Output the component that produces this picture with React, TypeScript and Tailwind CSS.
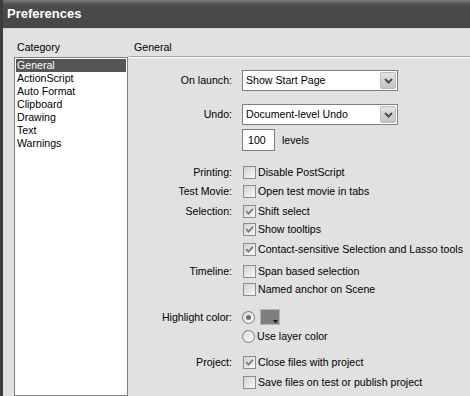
import React from 'react';

const categories = ['General', 'ActionScript', 'Auto Format', 'Clipboard', 'Drawing', 'Text', 'Warnings'];

const Check = ({ checked }: { checked?: boolean }) => (
  <span className="flex h-[13px] w-[13px] shrink-0 items-center justify-center border border-[#8c8c8c] bg-[linear-gradient(135deg,#d2d2d2,#f8f8f8)]">
    {checked && (
      <svg width="9" height="9" viewBox="0 0 9 9">
        <path d="M1.2 4.2 L3.5 6.6 L7.9 1.8" fill="none" stroke="#7c7c7c" strokeWidth="1.9" />
      </svg>
    )}
  </span>
);

const Radio = ({ checked }: { checked?: boolean }) => (
  <span className="flex h-[13px] w-[13px] shrink-0 items-center justify-center rounded-full border border-[#7a7a7a] bg-[linear-gradient(135deg,#dadada,#fbfbfb)]">
    {checked && <span className="h-[5px] w-[5px] rounded-full bg-[#6e6e6e]" />}
  </span>
);

const Select = ({ value }: { value: string }) => (
  <div className="flex h-[21px] w-[156px] items-center justify-between border border-[#7f7f7f] bg-white pl-[3px] pr-px">
    <span>{value}</span>
    <span className="flex h-[17px] w-[16px] items-center justify-center rounded-[2px] border border-[#bcbcbc] bg-[linear-gradient(to_bottom,#e4e4e4,#c2c2c2)]">
      <svg width="9" height="6" viewBox="0 0 9 6">
        <path d="M1 1 L4.5 4.5 L8 1" fill="none" stroke="#4c4c4c" strokeWidth="2" />
      </svg>
    </span>
  </div>
);

type RowProps = { label?: string; className: string; children: React.ReactNode };

const Row = ({ label, className, children }: RowProps) => (
  <div className={`flex items-center ${className}`}>
    <div className="w-[103px] shrink-0 text-right">{label}</div>
    <div className="ml-[10px] flex items-center">{children}</div>
  </div>
);

const CheckRow = ({ label, text, checked, className }: { label?: string; text: string; checked?: boolean; className: string }) => (
  <Row label={label} className={`h-[18px] ${className}`}>
    <span className="ml-px">
      <Check checked={checked} />
    </span>
    <span className="ml-[2px] whitespace-nowrap">{text}</span>
  </Row>
);

const App = () => {
  return (
    <div className="flex h-[396px] w-[470px] flex-col overflow-hidden border-l-[3px] border-[#3c3c3c] bg-[#e1e1e1] font-['Liberation_Sans',Arial,sans-serif] text-[10.6px] leading-[13px] text-black">
      <div className="flex h-[28px] shrink-0 items-center bg-[linear-gradient(to_bottom,#7c7c7c_0px,#5a5a5a_3px,#4b4b4b_6px,#474747_100%)] pl-[4px] pb-[1px] text-[13px] font-bold text-white">
        Preferences
      </div>
      <div className="h-px shrink-0 bg-[#d0d0d0]" />

      <div className="flex flex-1">
        <div className="flex w-[125px] shrink-0 flex-col">
          <div className="h-[28px] pl-[14px] pt-[12px]">Category</div>
          <div className="ml-[11px] flex-1 border border-[#7f7f7f] bg-white p-px">
            {categories.map((c, i) => (
              <div
                key={c}
                className={i === 0 ? 'h-[13px] bg-[#555555] pl-px text-white' : 'h-[13px] pl-px'}
              >
                {c}
              </div>
            ))}
          </div>
        </div>

        <div className="ml-[1px] flex flex-1 flex-col">
          <div className="h-[28px] border-b border-[#a4a4a4] pl-[5px] pt-[12px] shadow-[0_1px_0_#ffffff]">General</div>

          <Row label="On launch:" className="mt-[13px] h-[21px]">
            <Select value="Show Start Page" />
          </Row>
          <Row label="Undo:" className="mt-[13px] h-[21px]">
            <Select value="Document-level Undo" />
          </Row>
          <Row className="mt-[4px] h-[22px]">
            <div className="flex h-[22px] w-[33px] items-center border border-[#7f7f7f] bg-white pl-[5px]">100</div>
            <span className="ml-[7px]">levels</span>
          </Row>

          <CheckRow label="Printing:" text="Disable PostScript" className="mt-[12px]" />
          <CheckRow label="Test Movie:" text="Open test movie in tabs" className="mt-[1px]" />
          <CheckRow label="Selection:" text="Shift select" checked className="mt-[2px]" />
          <CheckRow text="Show tooltips" checked className="mt-0" />
          <CheckRow text="Contact-sensitive Selection and Lasso tools" checked className="mt-[2px]" />
          <CheckRow label="Timeline:" text="Span based selection" className="mt-[4px]" />
          <CheckRow text="Named anchor on Scene" className="mt-0" />

          <Row label="Highlight color:" className="mt-[10px] h-[18px]">
            <Radio checked />
            <span className="relative ml-[5px] h-[16px] w-[20px] border border-[#b4b4b4] bg-[#7e7e7e]">
              <svg className="absolute bottom-[1px] right-[1px]" width="5" height="3" viewBox="0 0 5 3">
                <path d="M0 0 H5 L2.5 3 Z" fill="#000" />
              </svg>
            </span>
          </Row>
          <Row className="mt-[1px] h-[18px]">
            <Radio />
            <span className="ml-[2px]">Use layer color</span>
          </Row>

          <CheckRow label="Project:" text="Close files with project" checked className="mt-[8px]" />
          <CheckRow text="Save files on test or publish project" className="mt-[2px]" />
        </div>
      </div>
    </div>
  );
};

export default App;
